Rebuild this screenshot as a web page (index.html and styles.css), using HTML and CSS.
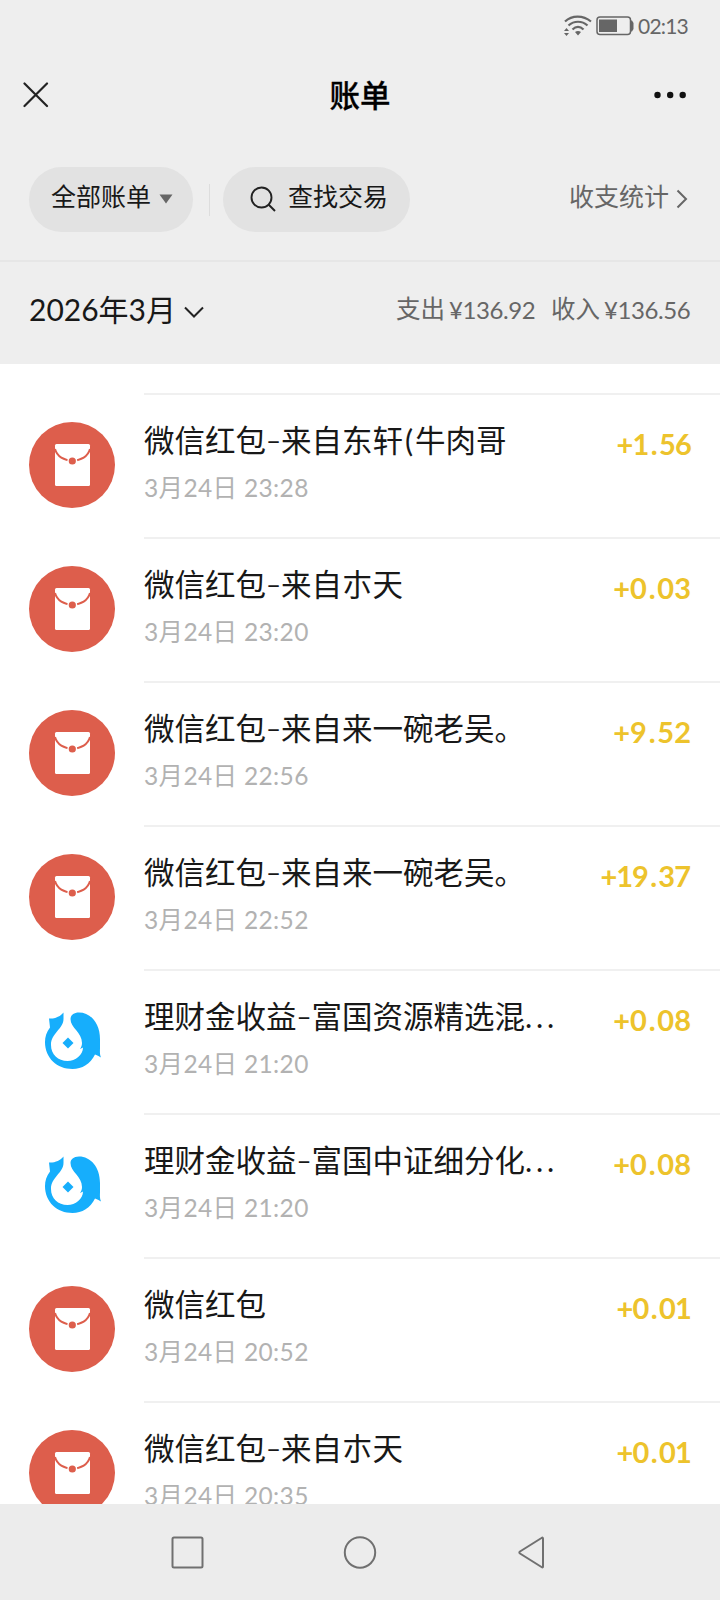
FILE: index.html
```html
<!DOCTYPE html>
<html lang="zh-CN">
<head>
<meta charset="utf-8">
<title>账单</title>
<link rel="stylesheet" href="styles.css">
</head>
<body>
<svg class="defs" width="0" height="0" aria-hidden="true">
  <symbol id="packet" viewBox="0 0 86 86">
    <circle cx="43" cy="43" r="43" fill="#dd5e4c"/>
    <rect x="26" y="22" width="35" height="42" rx="1.5" fill="#fff"/>
    <path d="M26 27C28 34.500 35 38.500 43.500 38.500S59 34.500 61 27" fill="none" stroke="#dd5e4c" stroke-width="2"/>
    <circle cx="43.3" cy="39" r="5" fill="#fff"/>
    <circle cx="43.3" cy="39" r="3.6" fill="#dd5e4c"/>
  </symbol>
  <symbol id="fund" viewBox="0 0 86 86">
    <path fill="#16aefc" d="M34.500 14.500C31.500 18.500 25.500 21 20 20.500L21 29.500C17.500 34 16 39 16 44C16 60 28 71 43.500 71C53 71 61.500 66 66 56.500C68 57 70 58 72 59.500C70.500 56 71 53 71 50V41C71 25 61.500 14.500 50 14.500C44.500 14.500 41.500 17.500 41.500 21C41.500 30 53 34 53 45C53 47 52.500 49 51 51L54 49.500C54 57 46.500 63 38.500 63C29 63 22 56.500 22 47C22 35 34.500 31 34.500 21Z"/>
    <path fill="#16aefc" d="M39 39.500L44.500 45L39 50.500L33.500 45Z"/>
  </symbol>
</svg>
<div class="screen">
  <div class="status">
    <svg width="28" height="24" viewBox="0 0 28 24" fill="none" stroke="#666" stroke-width="2.200">
      <path d="M1 7.500C8 1 19 1 27 7.500M4.500 11.500C10 6.500 18 6.500 23.500 11.500M8.500 15.500C12 12 16 12 19.500 15.500"/>
      <path d="M11 18C13 16.500 15 16.500 17 18L14 21.500ZM0 17L2.500 14L5 17ZM0 19L2.500 22L5 19Z" fill="#666" stroke="none"/>
    </svg>
    <svg width="38" height="20" viewBox="0 0 38 20">
      <rect x="1" y="1" width="33.500" height="17.500" rx="3" fill="none" stroke="#666" stroke-width="1.500"/>
      <rect x="3" y="3.500" width="18" height="12.500" fill="#666"/>
      <path d="M35 4.500H36L37.500 7V13L36 15.500H35Z" fill="#666"/>
    </svg>
    <span class="clock">02:13</span>
  </div>
  <div class="navbar">
    <svg width="26" height="26" viewBox="0 0 26 26" stroke="#222" stroke-width="2.200" stroke-linecap="round"><path d="M1.500 1.500L24 24M24 1.500L1.500 24"/></svg>
    <h1 class="title">账单</h1>
    <svg width="32" height="8" viewBox="0 0 32 8" fill="#111"><circle cx="3.500" cy="4" r="3.200"/><circle cx="16.200" cy="4" r="3.200"/><circle cx="28.700" cy="4" r="3.200"/></svg>
  </div>
  <div class="filters">
    <div class="pill pill-all"><span>全部账单</span><svg width="14" height="10" viewBox="0 0 14 10"><path d="M0.500 0.500H13.500L7 9.500Z" fill="#666"/></svg></div>
    <div class="sep"></div>
    <div class="pill pill-search"><svg width="26" height="26" viewBox="0 0 26 26" fill="none" stroke="#222" stroke-width="1.900"><circle cx="11.500" cy="11.500" r="10"/><path d="M18.500 18.500L25 25"/></svg><span>查找交易</span></div>
    <div class="stats"><span>收支统计</span><svg width="12" height="20" viewBox="0 0 12 20" fill="none" stroke="#666" stroke-width="2"><path d="M1.500 1.500L10 10L1.500 18.500"/></svg></div>
  </div>
  <div class="month">
    <span class="month-name">2026年3月</span>
    <svg width="20" height="12" viewBox="0 0 20 12" fill="none" stroke="#222" stroke-width="2"><path d="M1 1.500L10 10.500L19 1.500"/></svg>
    <div class="totals"><span>支出</span><span class="sum">¥136.92</span><span class="in">收入</span><span class="sum">¥136.56</span></div>
  </div>
  <ul class="list">
    <li class="row"><svg class="icon"><use href="#packet"/></svg><div class="body"><div class="text"><div class="name">微信红包<i>–</i>来自东轩<span class="paren">(</span>牛肉哥</div><div class="date">3月24日 23:28</div></div><div class="amount ones">+1<u>.</u>56</div></div></li>
    <li class="row"><svg class="icon"><use href="#packet"/></svg><div class="body"><div class="text"><div class="name">微信红包<i>–</i>来自朩天</div><div class="date">3月24日 23:20</div></div><div class="amount">+0<u>.</u>03</div></div></li>
    <li class="row"><svg class="icon"><use href="#packet"/></svg><div class="body"><div class="text"><div class="name">微信红包<i>–</i>来自来一碗老吴。</div><div class="date">3月24日 22:56</div></div><div class="amount">+9<u>.</u>52</div></div></li>
    <li class="row"><svg class="icon"><use href="#packet"/></svg><div class="body"><div class="text"><div class="name">微信红包<i>–</i>来自来一碗老吴。</div><div class="date">3月24日 22:52</div></div><div class="amount tight">+19<u>.</u>37</div></div></li>
    <li class="row"><svg class="icon"><use href="#fund"/></svg><div class="body"><div class="text"><div class="name">理财金收益<i>–</i>富国资源精选混<b>...</b></div><div class="date">3月24日 21:20</div></div><div class="amount">+0<u>.</u>08</div></div></li>
    <li class="row"><svg class="icon"><use href="#fund"/></svg><div class="body"><div class="text"><div class="name">理财金收益<i>–</i>富国中证细分化<b>...</b></div><div class="date">3月24日 21:20</div></div><div class="amount">+0<u>.</u>08</div></div></li>
    <li class="row"><svg class="icon"><use href="#packet"/></svg><div class="body"><div class="text"><div class="name">微信红包</div><div class="date">3月24日 20:52</div></div><div class="amount ones">+0<u>.</u>01</div></div></li>
    <li class="row"><svg class="icon"><use href="#packet"/></svg><div class="body"><div class="text"><div class="name">微信红包<i>–</i>来自朩天</div><div class="date">3月24日 20:35</div></div><div class="amount ones">+0<u>.</u>01</div></div></li>
  </ul>
  <div class="keys">
    <svg width="34" height="34" viewBox="0 0 34 34"><rect x="1.500" y="1.500" width="30" height="30" rx="1.500"/></svg>
    <svg width="34" height="34" viewBox="0 0 34 34"><circle cx="17" cy="16.500" r="15.200"/></svg>
    <svg width="34" height="34" viewBox="0 0 34 34"><path d="M28 2.500V30.500Q28 32 26.500 31L5 17.500Q3.700 16.500 5 15.500L26.500 2Q28 1 28 2.500Z"/></svg>
  </div>
</div>
</body>
</html>
```
FILE: styles.css
```css
* { box-sizing: border-box; }
body { margin: 0; background: #fff; font-family: Lato, "Noto Sans CJK SC", sans-serif; color: #181818; }
svg { display: block; flex: none; }
.defs { position: absolute; }
.screen { width: 720px; height: 1600px; overflow: hidden; display: flex; flex-direction: column; background: #eee; }
.status { height: 52px; flex: none; display: flex; align-items: center; justify-content: flex-end; padding-right: 31px; gap: 4px; color: #666; }
.clock { font-size: 21px; letter-spacing: -0.8px; line-height: 28px; width: 51px; white-space: nowrap; }
.navbar { height: 86px; flex: none; display: grid; grid-template-columns: 1fr auto 1fr; align-items: center; padding: 0 34px 0 23px; }
.navbar svg:last-child { justify-self: end; }
.title { margin: 0 0 1px 11px; font-size: 30.5px; font-weight: 500; line-height: 44px; color: #000; -webkit-text-stroke: 0.3px #000; }
.filters { height: 124px; flex: none; display: flex; align-items: flex-start; padding: 29px 32px 0 29px; border-bottom: 2px solid #e6e6e6; font-size: 25px; line-height: 36px; }
.pill { height: 65px; border-radius: 33px; background: #e2e2e2; display: flex; align-items: center; padding-bottom: 7px; }
.pill-all { width: 164px; padding-left: 22px; gap: 8px; }
.pill svg { margin-top: 6px; }
.sep { width: 1px; height: 32px; background: #ddd; margin: 17px 13px 0 16px; }
.pill-search { width: 187px; padding-left: 27px; gap: 12px; }
.stats { margin-left: auto; height: 58px; display: flex; align-items: center; gap: 7px; color: #666; }
.stats svg { margin-top: 6px; }
.month { height: 102px; flex: none; display: flex; align-items: center; padding: 0 29px 8px; font-size: 30px; line-height: 44px; }
.month svg { margin-top: 5px; }
.month-name { width: 155px; white-space: nowrap; }
.totals { margin-left: auto; display: flex; align-items: baseline; font-size: 24.5px; color: #666; }
.sum { margin-left: 4px; width: 87px; font-size: 24px; letter-spacing: -0.4px; white-space: nowrap; position: relative; top: 1px; }
.in { margin-left: 15px; }
.list { margin: 0; padding: 29px 0 0; list-style: none; background: #fff; height: 1140px; flex: none; overflow: hidden; }
.row { height: 144px; display: flex; padding-left: 29px; }
.icon { width: 86px; height: 86px; margin-top: 29px; }
.body { flex: 1; margin-left: 29px; border-top: 2px solid #f0f0f0; display: flex; justify-content: space-between; padding: 22px 29px 0 0; white-space: nowrap; }
.name { font-size: 30.5px; line-height: 46px; }
.name i { font-style: normal; display: inline-block; width: 15px; text-align: center; font-size: 26px; line-height: 30px; position: relative; top: -2px; }
.name b { font-weight: 400; letter-spacing: 3.8px; }
.paren { display: inline-block; width: 12px; text-align: center; }
.date { font-size: 24.5px; line-height: 36px; margin-top: 7px; letter-spacing: 0.35px; color: #b2b2b2; }
.amount { font-size: 29px; line-height: 46px; margin-top: 4px; font-weight: 700; color: #edc32c; }
.amount u { text-decoration: none; display: inline-block; width: 10.5px; text-align: center; }
.amount.tight { letter-spacing: -1px; padding-right: 1px; }
.amount.ones { letter-spacing: -0.8px; }
.keys { height: 96px; flex: none; background: #ececec; display: flex; justify-content: center; align-items: center; gap: 138px; }
.keys svg { fill: none; stroke: #707070; stroke-width: 2; margin-top: 1px; }
```
